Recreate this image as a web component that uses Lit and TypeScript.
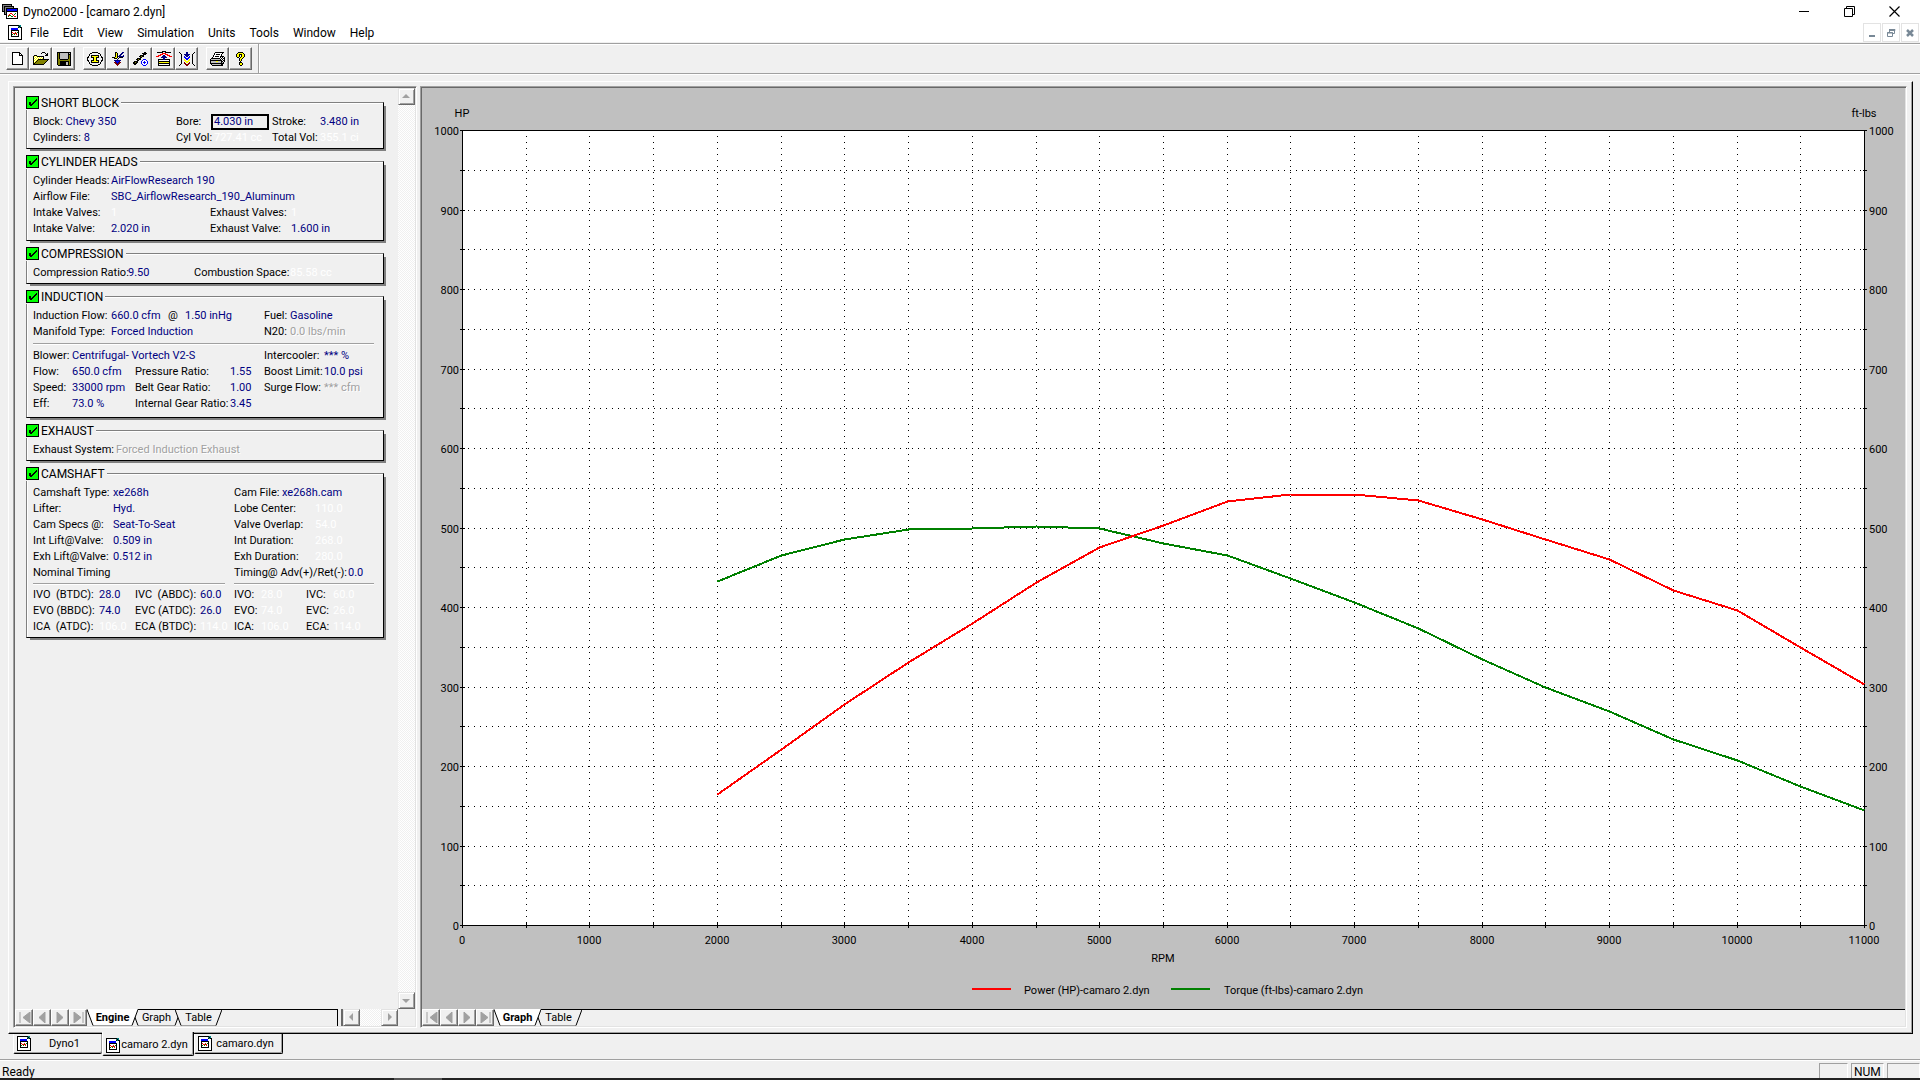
import { LitElement, html, svg, css } from "lit";
import { customElement, property, state } from "lit/decorators.js";
import { classMap } from "lit/directives/class-map.js";

const COLORS: Record<string, string> = {
  X: "#000000", W: "#ffffff", Y: "#ffff00", O: "#808000", G: "#c0c0c0",
  D: "#808080", B: "#0000ff", N: "#000080", R: "#ff0000", M: "#800000",
  T: "#008080", L: "#008000",
};

/* Turns rows of colour letters into one path per colour. */
function pixels(rows: string[]) {
  const width = Math.max(...rows.map((r) => r.length));
  const paths: Record<string, string> = {};
  rows.forEach((row, y) => {
    for (let x = 0; x < row.length; ) {
      const c = row[x];
      let n = 1;
      while (row[x + n] === c) n++;
      if (COLORS[c]) paths[c] = (paths[c] ?? "") + `M${x} ${y}h${n}v1h-${n}z`;
      x += n;
    }
  });
  return html`<svg width=${width} height=${rows.length} viewBox="0 0 ${width} ${rows.length}"
    shape-rendering="crispEdges" aria-hidden="true">
    ${Object.entries(paths).map(([c, d]) => svg`<path fill=${COLORS[c]} d=${d}></path>`)}</svg>`;
}

const ICONS: Record<string, string[]> = {
  app: [
    "XXXXXXXXXX......",
    "XDDDDDDDDX......",
    "XDXXXXXXXXXX....",
    "XDXDDDDDDDDX....",
    "XDXDXXXXXXXXXXXX",
    "XDXDXBBBBBBBBBBX",
    "XDXDXBBBBBBBBBBX",
    "XXXDXXXXXXXXXXXX",
    "..XDXWWWWWWWWWWX",
    "..XDXWWWRRWWWLWX",
    "..XXXWWRWWRWLWWX",
    "....XWRLLWWRWWWX",
    "....XWLWWLLWRRWX",
    "....XWWWWWWWWWWX",
    "....XXXXXXXXXXXX",
  ],
  doc: [
    "XXXXXXXXXXXTT.",
    "XWWWWWWWWWTXT.",
    "XWWWWWWWWWXTXX",
    "XWWBBBBBBBWWWX",
    "XWWBBBBBBBWWWX",
    "XWWXXXXXXXXWWX",
    "XWWXWWWWWWXWWX",
    "XWWXRWWRWLXWWX",
    "XWWXWRRLRWXWWX",
    "XWWXLWLWRWXWWX",
    "XWWXWWWWWWXWWX",
    "XWWXXXXXXXXWWX",
    "XWWWWWWWWWWWWX",
    "XWWWWWWWWWWWWX",
    "XXXXXXXXXXXXXX",
  ],
  new: [
    "XXXXXXXX...",
    "XWWWWWWXX..",
    "XWWWWWWXWX.",
    "XWWWWWWXXXX",
    "XWWWWWWWWWX",
    "XWWWWWWWWWX",
    "XWWWWWWWWWX",
    "XWWWWWWWWWX",
    "XWWWWWWWWWX",
    "XWWWWWWWWWX",
    "XWWWWWWWWWX",
    "XWWWWWWWWWX",
    "XXXXXXXXXXX",
  ],
  open: [
    ".........XXX....",
    "........X...X.X.",
    ".............XX.",
    ".XXX........XXX.",
    "XYWYXXXXXXX.....",
    "XWYWYWYWYWX.....",
    "XYWYWYWYWYX.....",
    "XWYWYXXXXXXXXXXX",
    "XYWYXOOOOOOOOOX.",
    "XWYXOOOOOOOOOX..",
    "XYXOOOOOOOOOX...",
    "XXOOOOOOOOOX....",
    "XXXXXXXXXXX.....",
  ],
  save: [
    "XXXXXXXXXXXXXX",
    "XOXGGGGGGGGXGX",
    "XOXGGGGGGGGXXX",
    "XOXGGGGGGGGXOX",
    "XOXGGGGGGGGXOX",
    "XOXGGGGGGGGXOX",
    "XOXGGGGGGGGXOX",
    "XOOXXXXXXXXOOX",
    "XOOOOOOOOOOOOX",
    "XOOXXXXXXXXXOX",
    "XOOXXXXXXGGXOX",
    "XOOXXXXXXGGXOX",
    "XOOXXXXXXGGXOX",
    ".XXXXXXXXXXXXX",
  ],
  block: [
    ".....XXXXXX.....",
    "...XX......XX...",
    "..X..........X..",
    "..X.XXXXXXXX.X..",
    ".X..XYYYYYYX..X.",
    "XX..XXXYYXXX..XX",
    "X.....XYYX.....X",
    "X.....XYYX.....X",
    "XX..XXXYYXXX..XX",
    ".X..XYYYYYYX..X.",
    "..X.XXXXXXXX.X..",
    "..X..........X..",
    "...XX......XX...",
    ".....XXXXXX.....",
  ],
  intake: [
    "...XX.....NN",
    "...XYX...NN.",
    "...XYX..NN..",
    "...XYX.NN..N",
    "...XYXNNNNNN",
    "XXXYYX.XXXX.",
    "..XXX.X.....",
    ".....N......",
    "..NNNNNNN...",
    "...NBBBN....",
    "..MMNBNMM...",
    "...MMNMM....",
    "....MMM.....",
    ".....M......",
  ],
  cam: [
    "...........XX...",
    ".........XXXXX..",
    "..........XXX...",
    ".......XXXX.....",
    "......XXOXX.....",
    ".......XX.......",
    "....XXXX........",
    "...XXOXX..BBB...",
    "....XX...BWWWB..",
    ".XXXX...BWWBWWB.",
    "XXOXX...BWBBBWB.",
    "XXXX....BWWBWWB.",
    ".XX......BWWWB..",
    "..........BBB...",
  ],
  heads: [
    "......XXXX......",
    ".XXXXXX..XXXXXX.",
    "......RRRR......",
    "....RRR..RRR....",
    "..RRR..NN..RRR..",
    "RRR...NNNN...RRR",
    ".....NNNNNN.....",
    ".......NN.......",
    "..XXXXXNNXXXXX..",
    "..XWWWWWWWWWWX..",
    "..XXXXXXXXXXXX..",
    "..XYYYYYYYYYYX..",
    "..XXXXXXXXXXXX..",
    "..XWWWWWWWWWWX..",
    "..XXXXXXXXXXXX..",
  ],
  flow: [
    "X......NN......X",
    ".X.....NN.....X.",
    "..X..NNNNNN..X..",
    "..X...NNNN...X..",
    "..X..B.NN.B..X..",
    "..X..BB..BB..X..",
    "..X...BBBB...X..",
    "..X..Y.BB.Y..X..",
    "..X..YY..YY..X..",
    "..X...YYYY...X..",
    "..X..M.YY.M..X..",
    "..X..MM..MM..X..",
    ".X....MMMM....X.",
    "X......MM......X",
  ],
  print: [
    ".....XXXXXXXXX..",
    "....XWWWWWWWX...",
    "....XWXXXXWX....",
    "...XWWWWWWWX....",
    "...XWXXXXWXXXX..",
    "..XWWWWWWWX.X.X.",
    ".XXXXXXXXX.X.XX.",
    "XGGGGGGGGGX.X.X.",
    "XXXXXXXXXXXX.XX.",
    "XGGGGGYYGGGXX.X.",
    "XGGGGGGGGGGXGX..",
    "XXXXXXXXXXXXXX..",
    ".XGGGGGGGGGXX...",
    "..XXXXXXXXXXX...",
  ],
  help: [
    "..XXXXX..",
    ".XYYYYYX.",
    "XYYXXXYYX",
    "XYYX.XYYX",
    "XYYX.XYYX",
    ".XX.XYYX.",
    "...XYYX..",
    "...XYX...",
    "...XYX...",
    "....X....",
    "...XXX...",
    "...XYYX..",
    "...XYYX..",
    "....XX...",
  ],
};

const TOOLBAR = [
  [["new", "New"], ["open", "Open"], ["save", "Save"]],
  [["block", "Short block"], ["intake", "Induction"], ["cam", "Camshaft"], ["heads", "Cylinder heads"], ["flow", "Exhaust"]],
  [["print", "Print"], ["help", "Help"]],
];

const MENU = ["File", "Edit", "View", "Simulation", "Units", "Tools", "Window", "Help"];

const POWER = [165, 221, 278, 331, 380, 431, 476, 503, 533, 542, 542, 535, 511, 486, 461, 422, 396, 350, 303];
const TORQUE = [433, 465, 486, 498, 500, 502, 500, 480, 466, 437, 406, 374, 335, 300, 269, 234, 207, 175, 145];

const baseStyles = css`
  * { box-sizing: border-box; }
  button { font: inherit; color: inherit; margin: 0; padding: 0; }
  svg { display: block; flex: none; }
`;

/* Dyno curve plot; redraws its scales to the size of its box. */
@customElement("dyno-chart")
export class DynoChart extends LitElement {
  @state() private w = 1483;
  @state() private h = 921;
  private observer = new ResizeObserver(([e]) => {
    this.w = Math.round(e.contentRect.width) || this.w;
    this.h = Math.round(e.contentRect.height) || this.h;
  });

  static styles = [
    baseStyles,
    css`
      :host { display: block; min-width: 0; min-height: 0; overflow: hidden; background: #c0c0c0; }
      text { font: 11px/16px Roboto, "Liberation Sans", sans-serif; fill: #000; }
      .mid { text-anchor: middle; }
      .end { text-anchor: end; }
      .axis { stroke: #000; fill: none; shape-rendering: crispEdges; }
      .grid { stroke: #000; stroke-dasharray: 1 5; shape-rendering: crispEdges; }
      .power, .torque { fill: none; stroke-width: 2; shape-rendering: crispEdges; }
      .power { stroke: #f00; }
      .torque { stroke: #008000; }
    `,
  ];

  connectedCallback() {
    super.connectedCallback();
    this.observer.observe(this);
  }
  disconnectedCallback() {
    this.observer.disconnect();
    super.disconnectedCallback();
  }

  render() {
    const { w, h } = this;
    const left = 40, top = 42, right = w - 41, bottom = h - 84;
    const x = (rpm: number) => left + ((right - left) * rpm) / 11000;
    const y = (v: number) => bottom - ((bottom - top) * v) / 1000;
    const px = (v: number) => Math.round(v) + 0.5;
    const line = (values: number[]) => values.map((v, i) => `${px(x(2000 + i * 500))},${px(y(v))}`).join(" ");
    const cols = Array.from({ length: 23 }, (_, i) => i * 500);
    const rows = Array.from({ length: 21 }, (_, i) => i * 50);
    const mid = Math.round((left + right) / 2);
    const key = mid - 191;
    const keyY = bottom + 64;
    return html`<svg width=${w} height=${h} viewBox="0 0 ${w} ${h}" role="img" aria-label="Power and torque against RPM">
      <rect x=${left} y=${top} width=${right - left} height=${bottom - top} fill="#fff"></rect>
      ${cols.slice(1, -1).map((c) => svg`<line class="grid" x1=${px(x(c))} x2=${px(x(c))} y1=${top} y2=${bottom}></line>`)}
      ${rows.slice(1, -1).map((r) => svg`<line class="grid" x1=${left} x2=${right} y1=${px(y(r))} y2=${px(y(r))}></line>`)}
      <rect class="axis" x=${left + 0.5} y=${top + 0.5} width=${right - left} height=${bottom - top}></rect>
      ${cols.map((c) => svg`<line class="axis" x1=${px(x(c))} x2=${px(x(c))} y1=${bottom - 3} y2=${bottom + 3}></line>`)}
      ${rows.map((r) => svg`
        <line class="axis" x1=${left - 2} x2=${left + 3} y1=${px(y(r))} y2=${px(y(r))}></line>
        <line class="axis" x1=${right - 1} x2=${right + 3} y1=${px(y(r))} y2=${px(y(r))}></line>`)}
      ${cols.filter((c) => c % 1000 === 0).map((c) => svg`<text class="mid" x=${Math.round(x(c))} y=${bottom + 19}>${c}</text>`)}
      ${rows.filter((r) => r % 100 === 0).map((r) => svg`
        <text class="end" x=${left - 3} y=${Math.round(y(r)) + 5}>${r}</text>
        <text x=${right + 5} y=${Math.round(y(r)) + 5}>${r}</text>`)}
      <text class="mid" x=${left} y=${top - 13}>HP</text>
      <text class="mid" x=${right} y=${top - 13}>ft-lbs</text>
      <text class="mid" x=${mid} y=${bottom + 37}>RPM</text>
      <polyline class="torque" points=${line(TORQUE)}></polyline>
      <polyline class="power" points=${line(POWER)}></polyline>
      <line class="power" x1=${key} x2=${key + 39} y1=${keyY} y2=${keyY}></line>
      <text x=${key + 52} y=${keyY + 5}>Power (HP)-camaro 2.dyn</text>
      <line class="torque" x1=${key + 199} x2=${key + 238} y1=${keyY} y2=${keyY}></line>
      <text x=${key + 252} y=${keyY + 5}>Torque (ft-lbs)-camaro 2.dyn</text>
    </svg>`;
  }
}

/* Sheet tabs with slanted sides and the four record arrows before them. */
@customElement("sheet-tabs")
export class SheetTabs extends LitElement {
  @property({ attribute: false }) tabs: [string, number][] = [];
  @property() active = "";

  static styles = [
    baseStyles,
    css`
      :host { display: flex; flex: 1; min-width: 0; height: 17px; font: 11px/18px Roboto, "Liberation Sans", sans-serif; }
      .nav { width: 18px; height: 17px; display: grid; place-items: center; background: #f0f0f0; border: 1px solid; border-color: #fff #696969 #696969 #fff; box-shadow: inset -1px -1px #a0a0a0; }
      .tabs { display: flex; flex: 1; border-top: 1px solid #000; }
      .tab { position: relative; height: 17px; margin: -1px -6px 0 0; border: 0; background: none; }
      .tab.active { z-index: 1; font-weight: bold; }
      .edge { position: absolute; left: 0; top: 0; }
      .name { position: relative; }
      .fill { fill: #f0f0f0; }
      .active .fill { fill: #fff; }
      .side { fill: none; stroke: #000; }
      .foot { stroke: #a0a0a0; shape-rendering: crispEdges; }
    `,
  ];

  render() {
    const arrow = ["M2 0v11M12 0v11L5 5.5z", "M9 0v11L3 5.5z", "M3 0v11L9 5.5z", "M11 0v11M2 0v11L9 5.5z"];
    const names = ["First", "Previous", "Next", "Last"];
    return html`
      ${arrow.map((d, i) => html`<button class="nav" aria-label=${names[i]}>
        <svg width="13" height="11"><path d=${d} fill="#a0a0a0" stroke="#a0a0a0"></path></svg></button>`)}
      <div class="tabs" role="tablist">
        ${this.tabs.map(([name, w]) => {
          const active = name === this.active;
          const top = active ? 0 : 1;
          return html`<button role="tab" aria-selected=${active}
            class=${classMap({ tab: true, active })} @click=${() => (this.active = name)}>
            <svg class="edge" width=${w} height="17">
              <path class="fill" d="M0 ${top}L6 16H${w - 6}L${w} ${top}z"></path>
              <path class="foot" d="M6 16.5H${w - 6}"></path>
              <path class="side" d="M0 .5L6 16.5M${w - 6} 16.5L${w} .5"></path>
            </svg>
            <svg width=${w} height="0"></svg><span class="name">${name}</span></button>`;
        })}
      </div>`;
  }
}

type Cell = [kind: "l" | "v" | "g" | "d", text: string, span?: number];

@customElement("engine-form")
export class EngineForm extends LitElement {
  static styles = [
    baseStyles,
    css`
      :host { display: flex; flex-direction: column; gap: 5px; padding: 7px 14px 0 11px; overflow: hidden; font: 11px/16px Roboto, "Liberation Sans", sans-serif; color: #000; }
      .group { min-width: 0; width: 358px; margin: 0; padding: 4px 6px 2px; border: 1px solid; border-color: #808080 #000 #000 #808080; box-shadow: inset 1px 1px #fff, 3px 3px 0 -1px #808080; }
      .roomy { padding-bottom: 3px; }
      .head { display: flex; align-items: center; height: 15px; margin-left: -7px; padding: 0 2px 0 0; background: #f0f0f0; font-size: 12px; }
      .toggle { display: flex; align-items: center; gap: 2px; }
      .tick { display: grid; }
      .tick > * { grid-area: 1 / 1; }
      .box { appearance: none; width: 13px; height: 13px; margin: 0; background: #0f0; border: 1px solid #000; }
      .mark { pointer-events: none; visibility: hidden; }
      .box:checked + .mark { visibility: visible; }
      .grid { display: grid; grid-auto-rows: 16px; white-space: pre; }
      .cell { min-width: 0; }
      .s2 { grid-column: span 2; }
      .s3 { grid-column: span 3; }
      .v { color: #000080; }
      .g { color: #fff; }
      .d { color: #a0a0a0; text-shadow: 1px 1px #fff; }
      .short { grid-template-columns: 143px 38px 58px 48px 1fr; }
      .heads { grid-template-columns: 78px 99px 81px 1fr; }
      .comp { grid-template-columns: 95px 66px 96px 1fr; }
      .ind { grid-template-columns: 78px 57px 17px 79px 26px 1fr; }
      .blow { grid-template-columns: 39px 63px 95px 34px 60px 1fr; padding-bottom: 2px; }
      .exh { grid-template-columns: 83px 1fr; }
      .cam { grid-template-columns: 80px 121px 48px 33px 33px 1fr; }
      .timing { grid-template-columns: 66px 36px 65px 34px 27px 45px 27px 1fr; }
      .bore { align-self: center; width: 58px; height: 16px; margin: 0 0 0 -3px; padding: 0 1px 1px; border: 2px solid #000; border-radius: 0; outline: 0; background: #f0f0f0; color: #000080; font: inherit; line-height: 11px; }
      .rules { display: flex; gap: 9px; margin: 3px 3px 3px 0; }
      .rule { flex: 1; height: 2px; background: #a0a0a0; border-bottom: 1px solid #fff; }
      .nominal { flex: none; width: 192px; }
      .cam-rules { margin: 2px 3px 2px 0; }
    `,
  ];

  private cells(cls: string, list: Cell[]) {
    return html`<div class="grid ${cls}">
      ${list.map(([k, t, s]) => html`<span class="cell ${k} ${s ? `s${s}` : ""}">${t}</span>`)}</div>`;
  }

  private group(id: string, title: string, body: unknown, roomy = false) {
    return html`<fieldset class=${classMap({ group: true, roomy })}>
      <legend class="head"><label class="toggle" for=${id}><span class="tick">
        <input class="box" type="checkbox" id=${id} checked />
        <svg class="mark" width="13" height="13"><path d="M3 6h2v2h1V7h1V6h1V5h1V4h1V3h1v2h-1v1H9v1H8v1H7v1H6v1H4V9H3z" fill="#000" shape-rendering="crispEdges"></path></svg>
      </span>${title}</label></legend>${body}</fieldset>`;
  }

  render() {
    return html`
      ${this.group("short", "SHORT BLOCK", html`<div class="grid short">
        <span>Block: <span class="v">Chevy 350</span></span>
        <label for="bore">Bore:</label><input class="bore" id="bore" .value=${"4.030 in"} />
        <span>Stroke:</span><span class="v">3.480 in</span>
        <span>Cylinders: <span class="v">8</span></span>
        <span>Cyl Vol:</span><span class="g">727.41 cc</span>
        <span>Total Vol:</span><span class="g">355.1 ci</span>
      </div>`)}
      ${this.group("heads", "CYLINDER HEADS", this.cells("heads", [
        ["l", "Cylinder Heads:"], ["v", "AirFlowResearch 190", 3],
        ["l", "Airflow File:"], ["v", "SBC_AirflowResearch_190_Aluminum", 3],
        ["l", "Intake Valves:"], ["g", "1"], ["l", "Exhaust Valves:"], ["g", "1"],
        ["l", "Intake Valve:"], ["v", "2.020 in"], ["l", "Exhaust Valve:"], ["v", "1.600 in"],
      ]), true)}
      ${this.group("comp", "COMPRESSION", this.cells("comp", [
        ["l", "Compression Ratio:"], ["v", "9.50"], ["l", "Combustion Space:"], ["g", "85.58 cc"],
      ]))}
      ${this.group("induction", "INDUCTION", html`
        ${this.cells("ind", [
          ["l", "Induction Flow:"], ["v", "660.0 cfm"], ["l", "@"], ["v", "1.50 inHg"], ["l", "Fuel:"], ["v", "Gasoline"],
          ["l", "Manifold Type:"], ["v", "Forced Induction", 3], ["l", "N20:"], ["d", "0.0 lbs/min"],
        ])}
        <div class="rules"><span class="rule"></span></div>
        ${this.cells("blow", [
          ["l", "Blower:"], ["v", "Centrifugal- Vortech V2-S", 3], ["l", "Intercooler:"], ["v", "*** %"],
          ["l", "Flow:"], ["v", "650.0 cfm"], ["l", "Pressure Ratio:"], ["v", "1.55"], ["l", "Boost Limit:"], ["v", "10.0 psi"],
          ["l", "Speed:"], ["v", "33000 rpm"], ["l", "Belt Gear Ratio:"], ["v", "1.00"], ["l", "Surge Flow:"], ["d", "*** cfm"],
          ["l", "Eff:"], ["v", "73.0 %"], ["l", "Internal Gear Ratio:"], ["v", "3.45", 3],
        ])}`, true)}
      ${this.group("exhaust", "EXHAUST", this.cells("exh", [
        ["l", "Exhaust System:"], ["d", "Forced Induction Exhaust"],
      ]))}
      ${this.group("camshaft", "CAMSHAFT", html`
        ${this.cells("cam", [
          ["l", "Camshaft Type:"], ["v", "xe268h"], ["l", "Cam File:"], ["v", "xe268h.cam", 3],
          ["l", "Lifter:"], ["v", "Hyd."], ["l", "Lobe Center:", 2], ["g", "110.0", 2],
          ["l", "Cam Specs @:"], ["v", "Seat-To-Seat"], ["l", "Valve Overlap:", 2], ["g", "54.0", 2],
          ["l", "Int Lift@Valve:"], ["v", "0.509 in"], ["l", "Int Duration:", 2], ["g", "268.0", 2],
          ["l", "Exh Lift@Valve:"], ["v", "0.512 in"], ["l", "Exh Duration:", 2], ["g", "280.0", 2],
          ["l", "Nominal Timing", 2], ["l", "Timing@ Adv(+)/Ret(-):", 3], ["v", "0.0"],
        ])}
        <div class="rules cam-rules"><span class="rule nominal"></span><span class="rule"></span></div>
        ${this.cells("timing", [
          ["l", "IVO  (BTDC):"], ["v", "28.0"], ["l", "IVC  (ABDC):"], ["v", "60.0"], ["l", "IVO:"], ["g", "28.0"], ["l", "IVC:"], ["g", "60.0"],
          ["l", "EVO (BBDC):"], ["v", "74.0"], ["l", "EVC (ATDC):"], ["v", "26.0"], ["l", "EVO:"], ["g", "74.0"], ["l", "EVC:"], ["g", "26.0"],
          ["l", "ICA  (ATDC):"], ["g", "106.0"], ["l", "ECA (BTDC):"], ["g", "114.0"], ["l", "ICA:"], ["g", "106.0"], ["l", "ECA:"], ["g", "114.0"],
        ])}`)}`;
  }
}

@customElement("app-root")
export class AppRoot extends LitElement {
  static styles = [
    baseStyles,
    css`
      :host { display: flex; flex-direction: column; height: 100vh; overflow: hidden; background: #f0f0f0; color: #000; font: 12px/16px Roboto, "Open Sans", sans-serif; }
      .title { display: flex; align-items: center; height: 23px; padding: 0 20px 0 2px; background: #fff; }
      .caption { flex: 1; margin-left: 5px; }
      .controls { display: flex; gap: 34px; }
      .ctl { width: 11px; height: 11px; border: 0; background: none; }
      .menubar { display: flex; align-items: center; height: 19px; padding: 0 1px 0 8px; background: #fff; }
      .menu { display: flex; flex: 1; gap: 14px; margin-left: 8px; }
      .item { border: 0; background: none; }
      .mdi { display: flex; gap: 1px; height: 19px; }
      .mdi-btn { width: 18px; height: 19px; display: grid; place-items: center; border: 1px solid #e3e3e3; background: #fff; }
      .toolbar { display: flex; height: 31px; margin-top: 1px; padding: 0 0 0 6px; border-top: 1px solid #a0a0a0; border-bottom: 1px solid #a0a0a0; box-shadow: inset 0 1px #fff, 0 1px #fff; }
      .set { display: flex; margin: 3px 8px 0 0; }
      .tool { display: grid; place-items: center; width: 23px; height: 23px; background: #f0f0f0; border: 1px solid; border-color: #fff #696969 #696969 #fff; box-shadow: inset -1px -1px #a0a0a0; }
      .set:last-of-type { margin-right: 6px; }
      .sep { width: 2px; background: #a0a0a0; border-right: 1px solid #fff; }
      .frame { display: grid; grid-template-columns: 404px minmax(0, 1fr); gap: 3px; flex: 1; min-height: 0; margin: 7px 7px 0 8px; padding: 4px 5px 5px 4px; border: 1px solid; border-color: #fff #000 #000 #fff; box-shadow: inset -1px -1px #a0a0a0; }
      .pane { display: grid; grid-template-rows: minmax(0, 1fr) 17px; min-width: 0; min-height: 0; border: 1px solid; border-color: #a0a0a0 #fff #fff #a0a0a0; padding: 1px; background: linear-gradient(#696969, #696969) 0 0 / 100% 1px no-repeat, linear-gradient(#696969, #696969) 0 0 / 1px 100% no-repeat, linear-gradient(#e3e3e3, #e3e3e3) 0 100% / 100% 1px no-repeat, linear-gradient(#e3e3e3, #e3e3e3) 100% 0 / 1px 100% no-repeat; }
      .upper, .lower { display: flex; min-width: 0; min-height: 0; }
      .form, .chart { flex: 1; }
      .track { background: conic-gradient(#fff 25%, #f0f0f0 0 50%, #fff 0 75%, #f0f0f0 0) 0 0 / 2px 2px; }
      .vscroll { display: flex; flex-direction: column; justify-content: space-between; width: 17px; }
      .sb { display: grid; place-items: center; width: 17px; height: 17px; background: #f0f0f0; border: 1px solid; border-color: #e3e3e3 #696969 #696969 #e3e3e3; box-shadow: inset 1px 1px #fff, inset -1px -1px #a0a0a0; }
      .hscroll { display: flex; justify-content: space-between; width: 55px; margin-right: 17px; }
      .split { width: 6px; border-left: 1px solid #000; border-right: 2px solid #696969; }
      .docs { display: flex; align-items: flex-start; height: 25px; padding-left: 13px; font-size: 11px; }
      .doc { display: flex; align-items: center; width: 89px; height: 20px; padding: 0 4px 0 3px; white-space: nowrap; background: #f0f0f0; border: 1px solid #000; border-top: 0; border-left-color: #fff; border-radius: 0 0 2px 2px; box-shadow: inset -1px -1px #a0a0a0; }
      .doc .name { flex: 1; }
      .doc.active { width: 92px; height: 24px; margin-top: -2px; padding-top: 3px; z-index: 1; }
      .doc:first-child { border-right: 0; }
      .status { display: flex; gap: 3px; height: 19px; padding: 3px 0 0 2px; border-top: 1px solid #a0a0a0; box-shadow: inset 0 1px #fff; }
      .ready { flex: 1; padding-top: 3px; line-height: 13px; }
      .ind { width: 29px; height: 15px; padding: 2px 0 0 2px; line-height: 13px; border: 1px solid #a0a0a0; border-right-color: #fff; border-bottom: 0; }
      .num, .last { width: 33px; }
      .edge { height: 2px; background: linear-gradient(90deg, #222 394px, #555 0 442px, #222 0); }
    `,
  ];

  private scroll(label: string, d: string) {
    return html`<button class="sb" aria-label=${label}><svg width="9" height="9"><path d=${d} fill="#a0a0a0"></path></svg></button>`;
  }

  private doc(name: string, active = false) {
    return html`<button role="tab" aria-selected=${active} class=${classMap({ doc: true, active })}>
      ${pixels(ICONS.doc)}<span class="name">${name}</span></button>`;
  }

  render() {
    return html`
      <header class="title">
        ${pixels(ICONS.app)}<span class="caption">Dyno2000 - [camaro 2.dyn]</span>
        <div class="controls">
          <button class="ctl" aria-label="Minimize"><svg width="11" height="11"><path d="M0 5.5H10" stroke="#000"></path></svg></button>
          <button class="ctl" aria-label="Restore"><svg width="11" height="11"><path d="M.5 2.5H8.5V10.5H.5zM2.5 2V.5H10.5V8.5H9" fill="none" stroke="#000"></path></svg></button>
          <button class="ctl" aria-label="Close"><svg width="11" height="11"><path d="M.5 .5L10.5 10.5M10.5 .5L.5 10.5" stroke="#000" stroke-width="1.2"></path></svg></button>
        </div>
      </header>
      <nav class="menubar">
        ${pixels(ICONS.doc)}
        <div class="menu">${MENU.map((m) => html`<button class="item">${m}</button>`)}</div>
        <div class="mdi">
          <button class="mdi-btn" aria-label="Minimize document"><svg width="10" height="10"><path d="M2 8H8" stroke="#788896" stroke-width="2"></path></svg></button>
          <button class="mdi-btn" aria-label="Restore document"><svg width="10" height="10"><path d="M1.5 4.5h5v4h-5zM1 5h6M3.5 4V1.5h5v4H7M3 1.5h6v1H3" fill="none" stroke="#788896"></path></svg></button>
          <button class="mdi-btn" aria-label="Close document"><svg width="10" height="10"><path d="M2 2L8 8M8 2L2 8" stroke="#788896" stroke-width="2.5"></path></svg></button>
        </div>
      </nav>
      <div class="toolbar" role="toolbar">
        ${TOOLBAR.map((set) => html`<div class="set">${set.map(([id, label]) => html`<button class="tool" aria-label=${label}>${pixels(ICONS[id])}</button>`)}</div>`)}
        <span class="sep"></span>
      </div>
      <main class="frame">
        <section class="pane">
          <div class="upper">
            <engine-form class="form"></engine-form>
            <div class="vscroll track">${this.scroll("Scroll up", "M0 6h8L4 2z")}${this.scroll("Scroll down", "M0 3h8L4 7z")}</div>
          </div>
          <div class="lower">
            <sheet-tabs active="Engine" .tabs=${[["Engine", 51], ["Graph", 49], ["Table", 47]]}></sheet-tabs>
            <span class="split"></span>
            <div class="hscroll track">${this.scroll("Scroll left", "M6 0v8L2 4z")}${this.scroll("Scroll right", "M3 0v8l4-4z")}</div>
          </div>
        </section>
        <section class="pane">
          <div class="upper"><dyno-chart class="chart"></dyno-chart></div>
          <div class="lower"><sheet-tabs active="Graph" .tabs=${[["Graph", 47], ["Table", 47]]}></sheet-tabs></div>
        </section>
      </main>
      <div class="docs" role="tablist">${this.doc("Dyno1")}${this.doc("camaro 2.dyn", true)}${this.doc("camaro.dyn")}</div>
      <footer class="status">
        <span class="ready">Ready</span>
        <span class="ind"></span><span class="ind num">NUM</span><span class="ind last"></span>
      </footer>
      <div class="edge"></div>`;
  }
}
